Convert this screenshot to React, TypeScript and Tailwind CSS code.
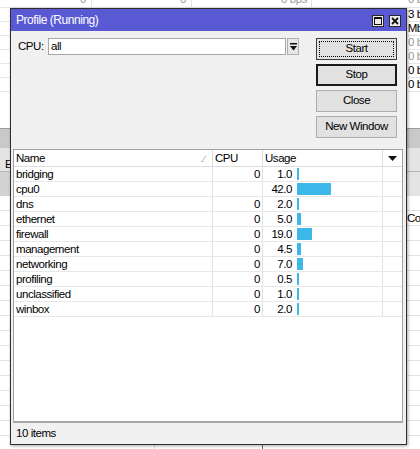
import React from 'react';

const rows = [
  { name: 'bridging', cpu: '0', usage: 1.0 },
  { name: 'cpu0', cpu: '', usage: 42.0 },
  { name: 'dns', cpu: '0', usage: 2.0 },
  { name: 'ethernet', cpu: '0', usage: 5.0 },
  { name: 'firewall', cpu: '0', usage: 19.0 },
  { name: 'management', cpu: '0', usage: 4.5 },
  { name: 'networking', cpu: '0', usage: 7.0 },
  { name: 'profiling', cpu: '0', usage: 0.5 },
  { name: 'unclassified', cpu: '0', usage: 1.0 },
  { name: 'winbox', cpu: '0', usage: 2.0 },
];

const bgTop = [
  { t: '3 bps', gray: false },
  { t: '1.2 Mbps', gray: false },
  { t: '0 bps', gray: true },
  { t: '0 bps', gray: true },
  { t: '0 bps', gray: false },
  { t: '0 bps', gray: false },
];

function BgRow({ right, gray }: { right?: string; gray?: boolean }) {
  return (
    <div className="h-[14px] flex border-b border-[#e6e6e6] leading-[13px]">
      <div className="w-[92px] shrink-0 border-r border-[#ececec]" />
      <div className="w-[100px] shrink-0 border-r border-[#ececec]" />
      <div className="w-[120px] shrink-0 border-r border-[#ececec]" />
      <div className={`w-[124px] shrink-0 text-right pr-[2px] ${gray ? 'text-[#9a9a9a]' : 'text-black'}`}>{right}</div>
    </div>
  );
}

function LowRow({ right }: { right?: string }) {
  return (
    <div className="h-[15px] flex border-b border-[#e2e2e2] leading-[14px]">
      <div className="w-[155px] shrink-0 border-r border-[#d8d8d8]" />
      <div className="w-[108px] shrink-0 border-r border-[#6a6a6a]" />
      <div className="flex-1" />
      <div className="w-[13px] shrink-0 text-black overflow-hidden whitespace-nowrap">{right}</div>
    </div>
  );
}

function WinButton({ children, kind }: { children: React.ReactNode; kind: 'focus' | 'default' | 'normal' }) {
  if (kind === 'focus') {
    return (
      <div className="h-[22px] bg-[#e1e1e1] border border-[#3c3c3c] p-[2px]">
        <div className="h-full border border-dotted border-black flex items-center justify-center">{children}</div>
      </div>
    );
  }
  if (kind === 'default') {
    return (
      <div className="h-[22px] bg-[#e1e1e1] border-2 border-[#1a1a1a] flex items-center justify-center">{children}</div>
    );
  }
  return (
    <div className="h-[22px] bg-[#e1e1e1] border border-[#adadad] flex items-center justify-center">{children}</div>
  );
}

export default function App() {
  const lowRows = Array.from({ length: 17 });
  return (
    <div className="relative w-[420px] h-[449px] overflow-hidden bg-white text-[11.5px] tracking-[-0.45px] text-black font-['Liberation_Sans',Arial,sans-serif]">
      {/* background window */}
      <div className="flex flex-col">
        <div className="-mt-[7px] h-[15px] flex border-b border-[#e6e6e6] leading-[13px] text-[#9a9a9a]">
          <div className="w-[92px] shrink-0 border-r border-[#e2e2e2] text-right pr-[5px]">0</div>
          <div className="w-[100px] shrink-0 border-r border-[#e2e2e2] text-right pr-[5px]">0</div>
          <div className="w-[120px] shrink-0 border-r border-[#e2e2e2] text-right pr-[4px]">0 bps</div>
          <div className="w-[124px] shrink-0 text-right pr-[2px]">0 bps</div>
        </div>
        {bgTop.map((r, i) => (
          <BgRow key={i} right={r.t} gray={r.gray} />
        ))}
        <div className="h-[36px]" />
        <div className="h-[20px] bg-[#c9c9c9] border-t border-[#9c9c9c]" />
        <div className="h-[24px] bg-[#e4e4e4] border-b border-[#b4b4b4] flex items-end leading-[14px]">
          <span className="pl-[5px]">E</span>
        </div>
        <div className="h-[24px] flex">
          <div className="w-[10px] bg-[#d2d2d2]" />
          <div className="flex-1" />
          <div className="w-[13px] bg-[#e4e4e4]" />
        </div>
        {lowRows.map((_, i) => (
          <LowRow key={i} right={i === 1 ? 'Co' : undefined} />
        ))}
      </div>

      {/* Profile window */}
      <div className="absolute left-[10px] top-[8px] w-[397px] h-[437px] border border-[#2e2e2e] bg-[#f0f0f0] flex flex-col shadow-[1px_1px_3px_rgba(0,0,0,0.35)]">
        <div className="h-[22px] shrink-0 bg-[#5959d4] flex items-center pl-[5px] pr-[5px] text-white text-[12px]">
          <span className="flex-1 leading-[22px]">Profile (Running)</span>
          <div className="flex items-center gap-[5px] mt-[1px]">
            <div className="w-[12px] h-[12px] bg-[#ececec] border border-[#2a2a2a] flex items-center justify-center">
              <svg width="8" height="8" viewBox="0 0 8 8">
                <rect x="0.5" y="0.5" width="7" height="7" fill="none" stroke="#111" strokeWidth="1" />
                <rect x="0" y="0" width="8" height="2" fill="#111" />
              </svg>
            </div>
            <div className="w-[12px] h-[12px] bg-[#ececec] border border-[#2a2a2a] flex items-center justify-center">
              <svg width="8" height="8" viewBox="0 0 8 8">
                <path d="M1 1 L7 7 M7 1 L1 7" stroke="#111" strokeWidth="1.8" />
              </svg>
            </div>
          </div>
        </div>

        <div className="flex pl-[7px] pr-[9px] pt-[7px] shrink-0">
          <div className="flex-1 flex items-start">
            <span className="w-[30px] h-[17px] leading-[17px]">CPU:</span>
            <div className="w-[238px] h-[17px] bg-white border border-[#a9a9a9] leading-[15px] pl-[2px]">all</div>
            <div className="ml-[1px] w-[12px] h-[17px] bg-[#e6e6e6] border border-[#b0b0b0] flex items-center justify-center">
              <svg width="7" height="8" viewBox="0 0 7 8">
                <rect x="0" y="0" width="7" height="1.5" fill="#111" />
                <path d="M0 3 L7 3 L3.5 7.5 Z" fill="#111" />
              </svg>
            </div>
          </div>
          <div className="w-[81px] flex flex-col gap-[4px]">
            <WinButton kind="focus">Start</WinButton>
            <WinButton kind="default">Stop</WinButton>
            <WinButton kind="normal">Close</WinButton>
            <WinButton kind="normal">New Window</WinButton>
          </div>
        </div>

        <div className="ml-[2px] mr-[3px] mt-[11px] flex-1 flex flex-col bg-white border border-[#a0a0a0] border-b-2 border-b-[#a8a8a8]">
          <div className="h-[17px] flex border-b border-[#dcdcdc] leading-[17px] shrink-0">
            <div className="w-[199px] border-r border-[#dcdcdc] pl-[2px] flex items-center">
              <span className="flex-1">Name</span>
              <svg width="6" height="7" viewBox="0 0 6 7" className="mr-[5px]">
                <path d="M1 6.5 L5 0.5" stroke="#b5b5b5" strokeWidth="1" />
                <path d="M0.5 6.5 L2.5 6.5" stroke="#b5b5b5" strokeWidth="1" />
              </svg>
            </div>
            <div className="w-[50px] border-r border-[#dcdcdc] pl-[2px]">CPU</div>
            <div className="w-[120px] border-r border-[#dcdcdc] pl-[2px]">Usage</div>
            <div className="flex-1 flex items-center justify-center">
              <svg width="9" height="5" viewBox="0 0 9 5">
                <path d="M0 0 L9 0 L4.5 5 Z" fill="#111" />
              </svg>
            </div>
          </div>
          {rows.map((r) => {
            const w = Math.max(2, Math.round(r.usage * 0.81));
            return (
              <div key={r.name} className="h-[15px] flex border-b border-[#e8e8e8] leading-[14px] shrink-0">
                <div className="w-[199px] border-r border-[#e2e2e2] pl-[2px]">{r.name}</div>
                <div className="w-[50px] border-r border-[#e2e2e2] text-right pr-[2px]">{r.cpu}</div>
                <div className="w-[120px] border-r border-[#e2e2e2] flex items-center">
                  <span className="w-[29px] text-right">{r.usage.toFixed(1)}</span>
                  <div className="ml-[5px] h-[12px] bg-[#3db6ea]" style={{ width: `${w}px` }} />
                </div>
                <div className="flex-1" />
              </div>
            );
          })}
        </div>

        <div className="h-[21px] shrink-0 pl-[5px] leading-[20px]">10 items</div>
      </div>
    </div>
  );
}
